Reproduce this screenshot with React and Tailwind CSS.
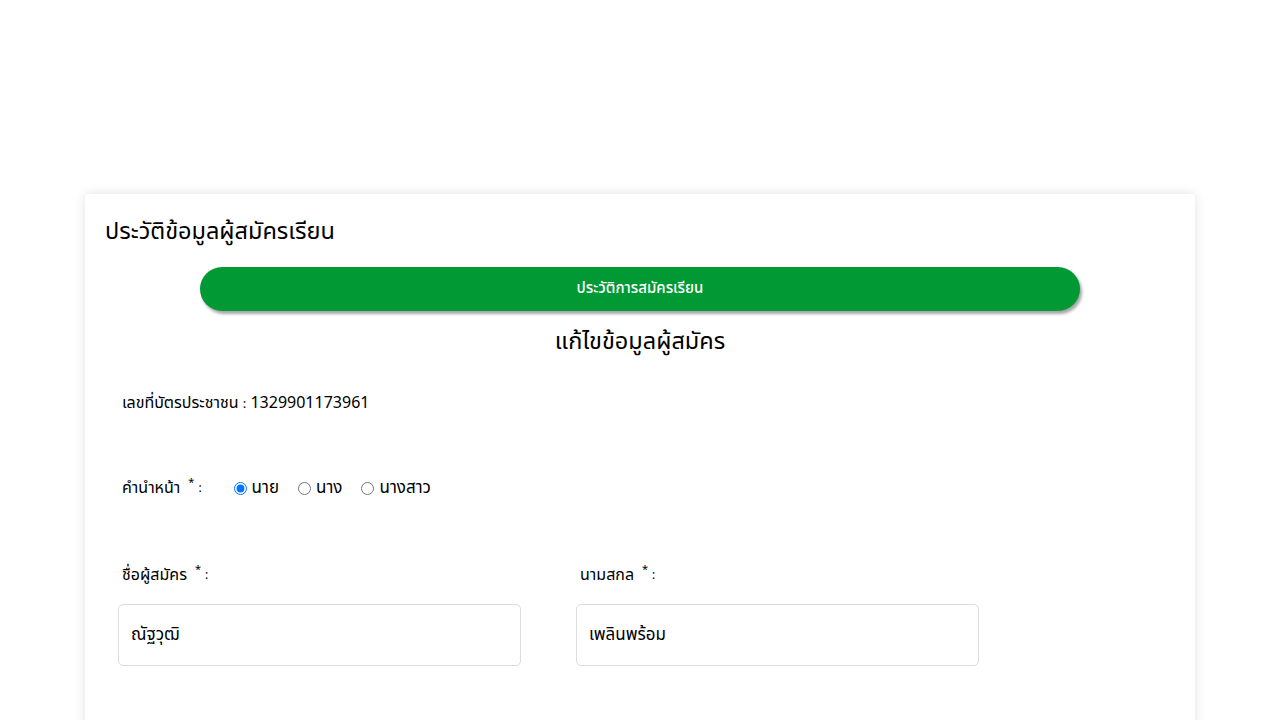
import React, { useState } from "react";

const FONT = { fontFamily: '"Noto Sans Thai", "Noto Sans", "Liberation Sans", sans-serif' };

function Field({ label, value, onChange }) {
  return (
    <div className="w-[458px]">
      <div className="pl-1 text-[16px] text-black h-[28px] flex items-center">
        {label} <span className="ml-2 text-[11px] -translate-y-[5px]">*</span>
        <span className="ml-1 text-[12px]">:</span>
      </div>
      <input
        value={value}
        onChange={(e) => onChange(e.target.value)}
        className="mt-[15px] w-[403px] h-[62px] border border-[#dcdcdc] rounded-[5px] px-3 text-[17px] text-black outline-none"
        style={FONT}
      />
    </div>
  );
}

export default function App() {
  const [prefix, setPrefix] = useState("นาย");
  const [firstName, setFirstName] = useState("ณัฐวุฒิ");
  const [lastName, setLastName] = useState("เพลินพร้อม");

  return (
    <div className="min-h-screen bg-white pt-[194px]" style={FONT}>
      <div className="mx-[85px] bg-white rounded-[4px] shadow-[0_0_12px_rgba(0,0,0,0.12)] px-5 pt-[18px] pb-16">
        <h2 className="text-[23.5px] text-black leading-[40px]">ประวัติข้อมูลผู้สมัครเรียน</h2>

        <div className="flex justify-center mt-[15px]">
          <button className="w-[880px] h-[44px] rounded-full bg-[#009933] text-white text-[15px] font-medium shadow-[2px_3px_3px_rgba(0,0,0,0.35)]">
            ประวัติการสมัครเรียน
          </button>
        </div>

        <h3 className="text-center text-[23.5px] text-black mt-[11px] leading-[40px]">แก้ไขข้อมูลผู้สมัคร</h3>

        <div className="pl-[13px]">
          <div className="mt-[28px] pl-1 text-[16px] text-black leading-[26px]">
            เลขที่บัตรประชาชน <span className="text-[13px]">:</span> 1329901173961
          </div>

          <div className="mt-[58px] pl-1 flex items-center text-[16px] text-black leading-[26px]">
            <span>คำนำหน้า</span>
            <span className="ml-2 text-[11px] -translate-y-[5px]">*</span>
            <span className="ml-1 text-[12px]">:</span>
            <div className="ml-[32px] flex items-center gap-[19px]">
              {["นาย", "นาง", "นางสาว"].map((p) => (
                <label key={p} className="flex items-center gap-[5px] cursor-pointer">
                  <input
                    type="radio"
                    name="prefix"
                    checked={prefix === p}
                    onChange={() => setPrefix(p)}
                    className="w-[13px] h-[13px] m-0"
                  />
                  <span className="text-[17px]">{p}</span>
                </label>
              ))}
            </div>
          </div>

          <div className="mt-[60px] flex">
            <Field label="ชื่อผู้สมัคร" value={firstName} onChange={setFirstName} />
            <Field label="นามสกล" value={lastName} onChange={setLastName} />
          </div>
        </div>
      </div>
    </div>
  );
}
